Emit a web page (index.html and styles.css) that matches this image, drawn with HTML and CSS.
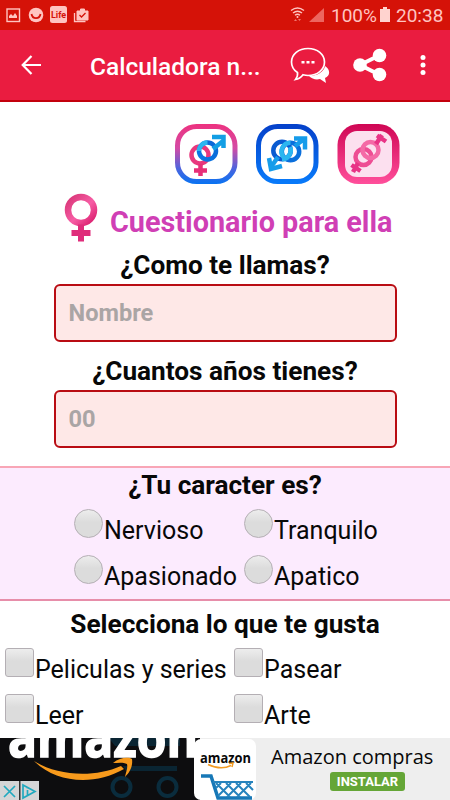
FILE: index.html
```html
<!DOCTYPE html>
<html lang="es">
<head>
<meta charset="utf-8">
<title>Calculadora</title>
<link rel="stylesheet" href="styles.css">
</head>
<body>
<div class="screen">
  <header class="status">
    <div class="status-left">
      <svg width="90" height="30" viewBox="0 0 90 30">
        <rect x="7" y="9" width="12.500" height="12.500" fill="none" stroke="#ffc4c0" stroke-width="1.4"/>
        <path d="M9 18v-2l2-2 2 2 2-3 2 3v2z" fill="#ffc4c0"/>
        <circle cx="36" cy="15" r="7.3" fill="#ffc4c0"/>
        <path d="M31.500 14c1 5.500 8 5.500 9 0" fill="none" stroke="#d51208" stroke-width="1.8"/>
        <rect x="50" y="6" width="17" height="17" rx="2.500" fill="#ffc4c0"/>
        <text x="51" y="18" class="life">Life</text>
        <path d="M77 11h11v9h-11zM80.500 11V9h4v2" fill="#ffc4c0" stroke="#ffc4c0" stroke-width="1"/>
        <path d="M74.500 13v8.500h11" fill="none" stroke="#ffc4c0" stroke-width="1.3"/>
        <path d="M79.500 15l2 2 4-4" fill="none" stroke="#d51208" stroke-width="1.3"/>
      </svg>
    </div>
    <svg width="36" height="30" viewBox="288 0 36 30">
      <path d="M291 10.500q6.500-5 13 0M293 13q4.500-3.500 9 0M295 15.300q2.500-2 5 0" fill="none" stroke="#ffc4c0" stroke-width="1.4"/>
      <circle cx="297.500" cy="17" r="1" fill="#ffc4c0"/>
      <path d="M294 21l1.500-2 1.500 2zM298 19h3l-1.500 2z" fill="#f0756d"/>
      <path d="M309 22L324 8v14z" fill="#ed665f"/>
    </svg>
    <span class="percent">100%</span>
    <svg class="battery" width="10" height="16" viewBox="0 0 10 16"><path d="M3 0h4v2h3v13H0V2h3z" fill="#ffd3cf"/></svg>
    <span class="clock">20:38</span>
  </header>

  <nav class="toolbar">
    <svg class="back" width="20" height="20" viewBox="0 0 20 20" fill="none" stroke="#fff" stroke-width="2.200"><path d="M20 10H2M10.500 1L1.700 10l8.800 9"/></svg>
    <h1 class="title">Calculadora n...</h1>
    <svg class="chat" width="40" height="38" viewBox="290 45 40 38">
      <path d="M325 65c6 4 5 10 0 12l1 5-6-4c-4 1-8 0-11-3 8 0 15-4 16-10z" fill="#fff"/>
      <path d="M308 47.500c9.500 0 16.500 6 16.500 13.500s-7 13.500-16.500 13.500c-2 0-3-.2-5-.7-2 2.600-4 4.200-7.500 4.700 2-2.500 2.500-4 2-7-4-2.500-6-6-6-10.500 0-7.500 7-13.500 16.500-13.500z" fill="#ea1c40" stroke="#fff" stroke-width="1.700"/>
      <path d="M301.500 60h3v2.500h-3zM306.500 60h3v2.500h-3zM311.500 60h3v2.500h-3z" fill="#fff"/>
    </svg>
    <svg class="share" width="34" height="34" viewBox="0 0 34 34"><path d="M27 7L7 17l20 10" fill="none" stroke="#fff" stroke-width="4"/><circle cx="26.500" cy="7.500" r="6.800" fill="#fff"/><circle cx="7" cy="17" r="6.800" fill="#fff"/><circle cx="26.500" cy="26.500" r="6.800" fill="#fff"/></svg>
    <svg class="more" width="6" height="22" viewBox="0 0 6 22" fill="#fff"><circle cx="3" cy="3.400" r="2.500"/><circle cx="3" cy="11" r="2.500"/><circle cx="3" cy="18.600" r="2.500"/></svg>
  </nav>

  <main class="content">
    <div class="modes">
      <svg width="64" height="62" viewBox="0 0 64 62">
        <defs>
          <linearGradient id="mix" gradientUnits="userSpaceOnUse" x1="0" y1="0" x2="0" y2="60"><stop stop-color="#ed327f"/><stop offset=".4" stop-color="#d44ba5"/><stop offset=".75" stop-color="#4a65df"/><stop offset="1" stop-color="#0873f2"/></linearGradient>
          <linearGradient id="male" x1="1" x2="0" y2="1"><stop stop-color="#0b66d6"/><stop offset=".5" stop-color="#0a6fdc"/><stop offset="1" stop-color="#0a78e8"/></linearGradient>
        </defs>
        <rect x="2.500" y="2.500" width="57.500" height="55" rx="19" fill="#fff" stroke="url(#mix)" stroke-width="5"/>
        <g fill="none" stroke-width="4.500"><circle cx="25" cy="31" r="8.500" stroke="#e8387e"/><path d="M25.500 40v12M19 46.500h13" stroke="#e72f78"/><circle cx="32.500" cy="27" r="8.500" stroke="url(#male)"/><path d="M24 27a8.500 8.500 0 0 1 8.500-8.500" stroke="#2bb6f0"/><path d="M38 21.500L48 13.500M37 9.500h11.500v11" transform="translate(0 3.500)" stroke="#129ee4"/></g>
      </svg>
      <svg width="64" height="62" viewBox="0 0 64 62">
        <defs><linearGradient id="blue" x2="0" y2="1"><stop stop-color="#0542cb"/><stop offset="1" stop-color="#0879f9"/></linearGradient></defs>
        <rect x="2.500" y="2.500" width="57.500" height="55" rx="19" fill="#fff" stroke="url(#blue)" stroke-width="5"/>
        <g fill="none" stroke-width="4.500"><circle cx="26" cy="26.500" r="8.700" stroke="#095bd1"/><circle cx="34.500" cy="27.500" r="8.700" stroke="#0a6fdc"/><path d="M27.500 33a8.700 8.700 0 0 1 7-14.200M34 23a8.700 8.700 0 0 1-8 12.200" stroke="#2bb6f0"/><path d="M22 33L15 43" stroke="#169cea"/><path d="M13 34l2 11 11-3M39 22l9-7M38 14.500h11v11" stroke="#169cea"/></g>
      </svg>
      <svg width="64" height="62" viewBox="0 0 64 62">
        <defs><linearGradient id="rose" x2="0" y2="1"><stop stop-color="#cf0654"/><stop offset="1" stop-color="#ff4f9b"/></linearGradient></defs>
        <rect x="0.500" y="0" width="62" height="60" rx="21" fill="url(#rose)"/>
        <rect x="8" y="7" width="47" height="46" rx="12" fill="#fce0ef"/>
        <g fill="none" stroke-width="4.500"><circle cx="26.500" cy="33" r="8" stroke="#ee4d93"/><circle cx="33.500" cy="26" r="8" stroke="#f46aa6"/><path d="M21 39l-5 9M14.500 41l9 6M39 20l6-9M40 11.500l9 6" stroke="#e83486"/></g>
      </svg>
    </div>

    <div class="heading">
      <svg width="34" height="50" viewBox="0 0 34 50"><defs><linearGradient id="fem" y2="1"><stop stop-color="#d83577"/><stop offset=".55" stop-color="#f75da5"/><stop offset="1" stop-color="#d91c6c"/></linearGradient></defs><circle cx="17" cy="17" r="13" fill="none" stroke="url(#fem)" stroke-width="6.500"/><path d="M14 31.500h6V37h6.500v6H20v5.500h-6V43H7.500v-6H14z" fill="#df2d7b"/></svg>
      <h2 class="pink">Cuestionario para ella</h2>
    </div>
    <h3 class="q q-name">¿Como te llamas?</h3>
    <input class="field" placeholder="Nombre">
    <h3 class="q q-age">¿Cuantos años tienes?</h3>
    <input class="field" placeholder="00">

    <section class="nature">
      <h3 class="q">¿Tu caracter es?</h3>
      <div class="options radios">
        <label class="option"><i class="mark round"></i><span>Nervioso</span></label>
        <label class="option"><i class="mark round"></i><span>Tranquilo</span></label>
        <label class="option"><i class="mark round"></i><span>Apasionado</span></label>
        <label class="option"><i class="mark round"></i><span>Apatico</span></label>
      </div>
    </section>
    <section class="likes">
      <h3 class="q">Selecciona lo que te gusta</h3>
      <div class="options checks">
        <label class="option"><i class="mark"></i><span>Peliculas y series</span></label>
        <label class="option"><i class="mark"></i><span>Pasear</span></label>
        <label class="option"><i class="mark"></i><span>Leer</span></label>
        <label class="option"><i class="mark"></i><span>Arte</span></label>
      </div>
    </section>
  </main>

  <footer class="ad">
    <svg class="ad-art" width="258" height="62" viewBox="0 738 258 62">
      <path d="M0 737h200v63H0z" fill="#0d0d0f"/>
      <path d="M108 737h72v9h-65zM123 766h54v5h-51z" fill="#0a2533"/>
      <g fill="none" stroke="#0a2c3d" stroke-width="4"><circle cx="121.500" cy="787" r="9"/><circle cx="167.500" cy="787" r="9"/></g>
      <text x="8" y="757" class="amazon-big" textLength="190" lengthAdjust="spacingAndGlyphs">amazon</text>
      <path d="M34 761c24 15 60 17 87 5l3 3c-30 17-68 14-90-8z" fill="#f79a1c"/>
      <path d="M113 763c7-6 16-6 19-4 1 7-2 13-7 18 1-5 3-9 2-13-4-2-9-1-14-1z" fill="#f79a1c"/>
      <path d="M0 781h39v19H0z" fill="#d4d5d6"/><path d="M19 781h1.500v19H19z" fill="#333"/>
      <path d="M4 786l11 11M15 786L4 797M23 785l12 6.500-12 6.500zM27.500 790v5M27.500 787.500v1" fill="none" stroke="#20a9bf" stroke-width="1.700"/>
      <path d="M200 738h58v62h-58z" fill="#eee"/>
      <rect x="194" y="739" width="62" height="61" rx="7" fill="#fff"/>
      <text x="200" y="762.500" class="amazon-small" textLength="51" lengthAdjust="spacingAndGlyphs">amazon</text>
      <path d="M208 764.500q13 6 23 1M229 763.500l4-.5-1 4" fill="none" stroke="#f39b22" stroke-width="1.500"/>
      <path d="M201 776h10l7 22h34" fill="none" stroke="#1778b7" stroke-width="3.500"/>
      <path d="M213 782h40M216 783l14 14M226 783l14 14M236 783l14 14M246 783l7 7M251 783l-14 14M241 783l-14 14M231 783l-13 13M221 783l-5 5" fill="none" stroke="#2683bd" stroke-width="2"/>
    </svg>
    <div class="ad-copy">
      <div class="ad-title">Amazon compras</div>
      <div class="install">INSTALAR</div>
    </div>
  </footer>
</div>
</body>
</html>
```
FILE: styles.css
```css
* { box-sizing: border-box; }
body { margin: 0; background: #fff; }
.screen { width: 450px; height: 800px; overflow: hidden; display: flex; flex-direction: column; font-family: Roboto, sans-serif; color: #080808; }
h1, h2, h3 { margin: 0; white-space: nowrap; }
svg { display: block; flex: none; }

.status { height: 30px; flex: none; display: flex; align-items: center; background: #d51208; color: #ffc4c0; }
.status-left { width: 288px; }
.life { font: 700 9px Roboto, sans-serif; fill: #d51208; }
.percent { margin-left: 7px; width: 48px; font-size: 19px; line-height: 32px; padding-top: 2px; }
.battery { margin-left: 1px; }
.clock { margin-left: 6px; padding-top: 2px; line-height: 32px; font-size: 19px; }

.toolbar { height: 72px; flex: none; display: flex; align-items: center; padding: 0 0 0 21px; background: #ea1c40; border-bottom: 2px solid #c3000d; color: #fff; }
.title { width: 200px; margin-left: 49px; font-size: 24.5px; font-weight: 500; line-height: 36px; padding-top: 3px; }
.share { margin-left: 23px; }
.more { margin-left: 33px; }

.content { flex: 1; min-height: 0; overflow: hidden; display: flex; flex-direction: column; align-items: center; padding-top: 1px; }
.modes { width: 100%; display: flex; gap: 17px; padding: 21px 0 0 175px; height: 89px; flex: none; }
.heading { width: 100%; height: 56px; flex: none; display: flex; padding-left: 64px; }
.heading svg { margin-top: 1px; }
.pink { margin-left: 12px; color: #d03fb5; font-size: 28.8px; line-height: 60px; }
.q { text-align: center; font-size: 26.2px; font-weight: 700; line-height: 34px; flex: none; }
.field { width: 343px; height: 58px; flex: none; border: 2.5px solid #b90c13; border-radius: 6px; background: #fee8e7; padding: 0 13px; font: 700 23.6px Roboto, sans-serif; outline: none; }
.field::placeholder { color: #aaa5a5; opacity: 1; }
.q-name { margin-bottom: 2px; }
.q-age { margin-top: 12px; margin-bottom: 2px; }
.nature { width: 100%; height: 135px; flex: none; margin-top: 18px; background: #fcebfe; border-top: 2px solid #f8a6b6; border-bottom: 2px solid #e78eaa; }
.likes { width: 100%; padding-top: 6px; }
.options { display: grid; grid-auto-rows: 46px; }
.radios { grid-template-columns: 170px 200px; padding-left: 74px; padding-top: 7px; }
.checks { grid-template-columns: 229px 200px; padding-left: 5px; padding-top: 7px; }
.option { display: flex; align-items: flex-start; font-size: 25px; white-space: nowrap; }
.option span { line-height: 30px; margin-top: 7px; margin-left: 1px; }
.mark { width: 29px; height: 29px; flex: none; border: 1px solid #b4afb4; border-radius: 3px; background: linear-gradient(#ededed, #dcdcdc 45%); }
.round { border-radius: 50%; }

.ad { height: 62px; flex: none; display: flex; background: #eee; }
.ad-copy { flex: 1; display: flex; flex-direction: column; align-items: flex-start; }
.ad-title { margin-left: 13px; margin-top: 4px; font: 20px/30px "Open Sans", sans-serif; white-space: nowrap; }
.install { margin: 0 0 0 72px; width: 75px; height: 19px; border-radius: 3px; background: #65a637; color: #fff; font-size: 13px; font-weight: 700; line-height: 19px; text-align: center; }
.amazon-big { font: 700 54px "Open Sans", sans-serif; fill: #fff; stroke: #fff; stroke-width: 1.5px; }
.amazon-small { font: 700 14px "Open Sans", sans-serif; fill: #080808; }
```
